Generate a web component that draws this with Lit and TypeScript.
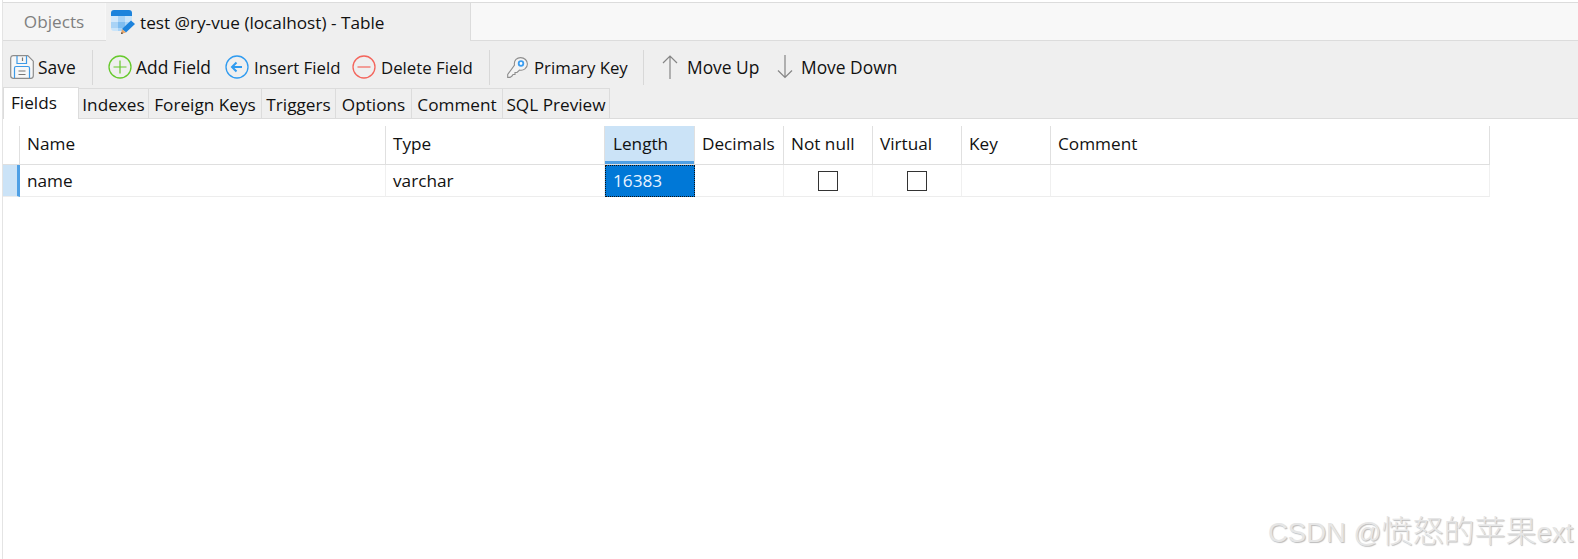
import { LitElement, html, css, svg } from "lit";
import { customElement } from "lit/decorators.js";

const icons: Record<string, unknown> = {
  save: svg`<svg width="24" height="24" viewBox="0 0 24 24" fill="none"><path d="M3 .7H17.800L23.300 6.200V20.800a2.500 2.500 0 0 1-2.500 2.500H3A2.500 2.500 0 0 1 .7 20.800V3A2.500 2.500 0 0 1 3 .7Z" fill="#f7f7f7" stroke="#8c8c8c" stroke-width="1.200"/><path d="M7 1V8.500H16.500V1" stroke="#3c9ae8" stroke-width="1.200"/><path d="M12.500 2.500V6" stroke="#777" stroke-width="1.200"/><path d="M4.500 23V13C4.500 12 5 11.500 6 11.500H18C19 11.500 19.500 12 19.500 13V23" stroke="#3c9ae8" stroke-width="1.200"/><path d="M8.500 16H15.500M8.500 19.500H15.500" stroke="#777" stroke-width="1.100"/></svg>`,
  add: svg`<svg width="24" height="24" viewBox="0 0 24 24" fill="none"><circle cx="12" cy="12" r="11" stroke="#66c92c" stroke-width="1.300"/><path d="M12 5.500V18.500M5.500 12H18.500" stroke="#66c92c" stroke-width="1.200"/></svg>`,
  insert: svg`<svg width="24" height="24" viewBox="0 0 24 24" fill="none"><circle cx="12" cy="12" r="11" stroke="#2f9bf0" stroke-width="1.300"/><path d="M11.500 7.500L7 12L11.500 16.500" stroke="#2f9bf0" stroke-width="2"/><path d="M7.500 12H17" stroke="#2f9bf0" stroke-width="2"/></svg>`,
  del: svg`<svg width="24" height="24" viewBox="0 0 24 24" fill="none"><circle cx="12" cy="12" r="11" stroke="#f4655c" stroke-width="1.300"/><path d="M5.500 12H18.500" stroke="#f4655c" stroke-width="1.200"/></svg>`,
  key: svg`<svg width="21" height="21" viewBox="0 0 21 21" fill="none"><path d="M7.500 8C6.500 3 10.500 .6 13.500 .6C17.500 .6 20.400 3.500 20.400 7C20.400 11 16.500 14 12.500 13L10 15.500H8V17.500H6L5 19L3 20.400H.7V17.500Z" fill="#f4f4f4" stroke="#8d8d8d" stroke-width="1.100"/><circle cx="14" cy="6.500" r="2.300" stroke="#3b9df0" stroke-width="1.800" fill="#fff"/></svg>`,
  up: svg`<svg width="16" height="24" viewBox="0 0 16 24" fill="none"><path d="M8 24V1M1 8L8 1L15 8" stroke="#858585" stroke-width="1.200"/></svg>`,
  down: svg`<svg width="16" height="24" viewBox="0 0 16 24" fill="none"><path d="M8 0V22.500M1 15.500L8 22.500L15 15.500" stroke="#858585" stroke-width="1.200"/></svg>`,
};

const tableIcon = svg`<svg width="25" height="25" viewBox="0 0 25 25" fill="none"><path d="M0 3a3 3 0 0 1 3-3H18a3 3 0 0 1 3 3V6H0Z" fill="#1d83dc"/><path d="M0 6H7V12H0Z" fill="#d2e8fb"/><path d="M7 6H14V12H7Z" fill="#a9d3f6"/><path d="M14 6H21V12H14Z" fill="#c9e4fa"/><path d="M0 12H7V18H0Z" fill="#a9d3f6"/><path d="M7 12H14V18H7Z" fill="#7fbdf0"/><path d="M14 12H21V14L17 18H14Z" fill="#a9d3f6"/><path d="M0 18H7V21H3a3 3 0 0 1-3-3Z" fill="#c9e4fa"/><path d="M7 18H13V21H7Z" fill="#a9d3f6"/><path d="M11 19L20 10.500L24 14L15 22.500Z" fill="#1d83dc"/><path d="M11 19L15 22.500L10 24Z" fill="#e8a66a"/><path d="M10.800 22L10 24L12 23.400Z" fill="#333"/></svg>`;

@customElement("app-root")
export class AppRoot extends LitElement {
  static styles = css`
    :host { display: block; width: 1578px; height: 559px; background: #fff; position: relative; overflow: hidden;
      font-family: "Open Sans", "Noto Sans", "Liberation Sans", sans-serif; font-size: 17.2px; color: #111; }
    .page { margin-left: 2px; border-left: 1px solid #e4e4e4; height: 100%; display: flex; flex-direction: column; }
    .windowtabs { margin-top: 2px; border-top: 1px solid #dcdcdc; height: 37px; display: flex; background: #f8f8f8; border-bottom: 1px solid #dcdcdc; flex: none; }
    .wt-obj { width: 102px; margin-right: 1px; display: flex; align-items: center; justify-content: center; color: #7f7f7f; background: #f5f5f5; }
    .wt-act { width: 365px; margin-bottom: -1px; background: #efefef; border-right: 1px solid #dcdcdc; display: flex; align-items: center; gap: 4px; padding-left: 5px; box-sizing: border-box; }
    .toolbar { height: 47px; box-sizing: border-box; padding: 5px 0 0 7px; background: #efefef; display: flex; align-items: center; flex: none; }
    .btn { display: flex; align-items: center; white-space: nowrap; font-size: 17.4px; flex: none; }
    .btn svg { flex: none; }
    .sep { width: 1px; height: 35px; background: #d8d8d8; flex: none; }
    .b-save { width: 82px; gap: 4px; }
    .b-add { width: 117px; gap: 4px; margin-left: 15px; }
    .b-ins { width: 127px; gap: 5px; font-size: 16.8px; }
    .b-del { width: 137px; gap: 5px; font-size: 16.8px; }
    .b-key { width: 136px; gap: 6px; margin-left: 17px; font-size: 16.8px; }
    .b-up { width: 115px; gap: 9px; margin-left: 18px; }
    .b-down { gap: 8px; }
    .subtabs { height: 31px; background: #efefef; border-bottom: 1px solid #dcdcdc; display: flex; align-items: flex-end; flex: none; box-sizing: border-box; }
    .st { height: 30px; box-sizing: border-box; display: flex; align-items: center; justify-content: center; border-right: 1px solid #dcdcdc; border-top: 1px solid #dcdcdc; padding-top: 2px; }
    .st.on { background: #fff; height: 32px; margin-bottom: -1px; border-left: 1px solid #dcdcdc; padding: 0 0 3px 7px; justify-content: flex-start; }
    .grid { margin-top: 7px; display: grid; grid-template-columns: 17px 366px 219px 90px 89px 89px 89px 89px 439px; width: 1487px; }
    .hc { height: 39px; box-sizing: border-box; border-bottom: 1.5px solid #dfdfdf; border-right: 1px solid #e0e0e0; padding: 0 0 3px 7px; display: flex; align-items: center; white-space: nowrap; }
    .hc.corner { padding: 0; }
    .hc.sel { background: #cbe3f7; box-shadow: inset 0 -3px 0 #4fa0e5; padding-left: 8px; }
    .dc { height: 32px; box-sizing: border-box; border-bottom: 1px solid #ededed; border-right: 1px solid #f0f0f0; padding: 0 0 1px 7px; display: flex; align-items: center; white-space: nowrap; }
    .dc.mark { background: #cbe3f7; padding: 0; border-right: 3px solid #4fa0e5; }
    .dc.cur { background: #0078d7; color: #e8f3ff; outline: 1px dotted #111; outline-offset: -1px; border: 1px solid #0078d7; }
    .dc.chk { padding: 0; justify-content: center; }
    .box { width: 20px; height: 20px; box-sizing: border-box; border: 1px solid #333; background: #fff; }
    .wm { position: absolute; left: 1268px; top: 515px; font-family: "Liberation Sans", "Noto Sans CJK SC", sans-serif; font-size: 27.5px; line-height: 34px; color: #e6e6e6; white-space: nowrap; text-shadow: 1px 1px 1px #bbb; }
    .wm .cjk { font-size: 31px; font-weight: 300; }
  `;

  render() {
    const tabs: [string, number][] = [["Indexes", 70], ["Foreign Keys", 113], ["Triggers", 74], ["Options", 76], ["Comment", 91], ["SQL Preview", 107]];
    const heads = ["Name", "Type", "Length", "Decimals", "Not null", "Virtual", "Key", "Comment"];
    return html`<div class="page">
      <div class="windowtabs">
        <div class="wt-obj">Objects</div>
        <div class="wt-act">${tableIcon}<span>test @ry-vue (localhost) - Table</span></div>
      </div>
      <div class="toolbar">
        <div class="btn b-save">${icons.save}<span>Save</span></div><div class="sep"></div>
        <div class="btn b-add">${icons.add}<span>Add Field</span></div>
        <div class="btn b-ins">${icons.insert}<span>Insert Field</span></div>
        <div class="btn b-del">${icons.del}<span>Delete Field</span></div><div class="sep"></div>
        <div class="btn b-key">${icons.key}<span>Primary Key</span></div><div class="sep"></div>
        <div class="btn b-up">${icons.up}<span>Move Up</span></div>
        <div class="btn b-down">${icons.down}<span>Move Down</span></div>
      </div>
      <div class="subtabs">
        <div class="st on" style="width:76px">Fields</div>
        ${tabs.map(([t, w]) => html`<div class="st" style="width:${w}px">${t}</div>`)}
      </div>
      <div class="grid">
        <div class="hc corner"></div>
        ${heads.map((h) => html`<div class="hc ${h === "Length" ? "sel" : ""}">${h}</div>`)}
        <div class="dc mark"></div>
        <div class="dc">name</div>
        <div class="dc">varchar</div>
        <div class="dc cur">16383</div>
        <div class="dc"></div>
        <div class="dc chk"><div class="box"></div></div>
        <div class="dc chk"><div class="box"></div></div>
        <div class="dc"></div>
        <div class="dc"></div>
      </div>
    </div>
    <div class="wm">CSDN @<span class="cjk">愤怒的苹果</span>ext</div>`;
  }
}
